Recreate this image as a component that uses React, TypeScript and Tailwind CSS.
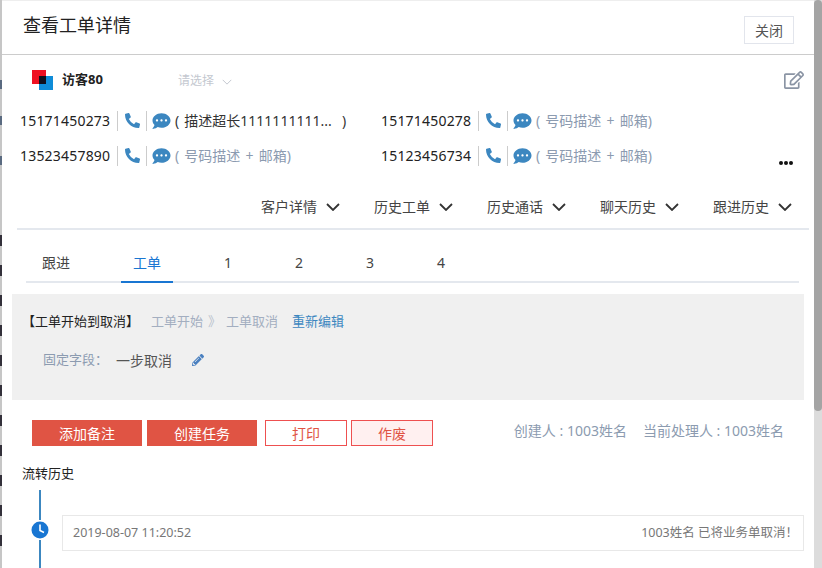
import { FaCommentDots, FaPencilAlt, FaPhoneAlt, FaRegEdit } from "react-icons/fa";

const font = "[font-family:'Noto_Sans','Noto_Sans_CJK_SC',sans-serif]";

const menus = ["客户详情", "历史工单", "历史通话", "聊天历史", "跟进历史"];
const tabs = ["跟进", "工单", "1", "2", "3", "4"];
const stripRows = Array.from({ length: 11 }, (_, i) => i);

function Chevron(props: { className: string; width: number }) {
  return (
    <svg viewBox="0 0 14 8" className={props.className} fill="none" stroke="currentColor" strokeWidth={props.width}>
      <path d="M1 1L7 7L13 1" />
    </svg>
  );
}

function PhoneRow(props: { phone: string; note: string; dark?: boolean }) {
  return (
    <div className="flex h-[35px] items-center">
      <span className="w-[97px] shrink-0 text-[14px] tracking-[0.2px] text-[#222]">{props.phone}</span>
      <span className="h-[20px] w-px shrink-0 bg-[#ccc]" />
      <span className="flex w-[28px] shrink-0 justify-center">
        <FaPhoneAlt className="h-[15px] w-[15px] text-[#3c87c0]" />
      </span>
      <span className="h-[20px] w-px shrink-0 bg-[#ccc]" />
      <FaCommentDots className="ml-[5px] h-[18px] w-[19px] shrink-0 text-[#3c87c0]" />
      <span
        className={`ml-[4px] whitespace-pre text-[14px] [word-spacing:1.5px] ${props.dark ? "text-[#333]" : "text-[#8c9bb0]"}`}
      >
        {props.note}
      </span>
    </div>
  );
}

export default function App() {
  return (
    <div className={`flex h-[568px] w-[822px] overflow-hidden bg-white ${font}`}>
      {/* 背后页面露出的一条 */}
      <div className="flex w-[2px] shrink-0 flex-col overflow-hidden bg-[#c6c6c6]">
        <div className="mt-[80px] h-[9px] w-[2px] shrink-0 bg-[#5a6a80]" />
        <div className="mt-[27px] h-[9px] w-[2px] shrink-0 bg-[#5a6a80]" />
        <div className="mt-[31px] h-[9px] w-[2px] shrink-0 bg-[#5a6a80]" />
        <div className="mt-[60px] shrink-0">
          {stripRows.map((i) => (
            <div key={i} className="flex h-[30.1px] items-center">
              <div className="h-[11px] w-[2px] bg-[#33303a]" />
            </div>
          ))}
        </div>
      </div>

      <div className="flex h-full min-w-0 flex-1 flex-col overflow-hidden border-t border-[#eee]">
        <div className="flex h-[54px] shrink-0 items-start justify-between border-b border-[#ccc] pl-[21px] pr-[20px]">
          <h1 className="mt-[11px] text-[18px] font-normal leading-[26px] text-[#222]">查看工单详情</h1>
          <button
            type="button"
            className="mt-[15px] h-[28px] w-[50px] border border-[#e2e5ec] text-[14px] text-[#555]"
          >
            关闭
          </button>
        </div>

        <div className="flex h-[37px] shrink-0 items-end pl-[30px] pr-[10px]">
          <div className="relative mb-[2px] h-[20px] w-[21px] shrink-0">
            <div className="h-[14px] w-[14px] bg-[#ee1122]" />
            <div className="absolute bottom-0 right-0 h-[14px] w-[14px] bg-[#0f8cd8]" />
            <div className="absolute left-[7px] top-[6px] h-[8px] w-[7px] bg-[#10101c]" />
          </div>
          <span className="mb-[3px] ml-[9px] w-[116px] text-[13px] font-bold leading-[20px] text-[#222]">访客80</span>
          <span className="mb-[1px] text-[12px] leading-[20px] text-[#c4c8d0]">请选择</span>
          <Chevron className="mb-[7px] ml-[8px] h-[6px] w-[10px] text-[#c4c8d0]" width={1.4} />
          <FaRegEdit className="mb-[3px] ml-auto h-[18px] w-[20px] text-[#8a94a4]" />
        </div>

        <div className="mt-[11px] flex shrink-0 pl-[18px]">
          <div className="w-[361px] shrink-0">
            <PhoneRow phone="15171450273" note="( 描述超长1111111111...  )" dark />
            <PhoneRow phone="13523457890" note="( 号码描述 + 邮箱)" />
          </div>
          <div className="w-[360px] shrink-0">
            <PhoneRow phone="15171450278" note="( 号码描述 + 邮箱)" />
            <PhoneRow phone="15123456734" note="( 号码描述 + 邮箱)" />
          </div>
          <div className="ml-[38px] flex items-end gap-[1px] pb-[8px]">
            <span className="h-[4px] w-[4px] rounded-full bg-[#111]" />
            <span className="h-[4px] w-[4px] rounded-full bg-[#111]" />
            <span className="h-[4px] w-[4px] rounded-full bg-[#111]" />
          </div>
        </div>

        <div className="ml-[15px] mr-[5px] mt-[16px] flex h-[41px] shrink-0 items-center justify-end gap-[34px] border-b-2 border-[#e4e8ee] pb-[3px] pr-[17px]">
          {menus.map((m) => (
            <div key={m} className="flex items-center gap-[9px] text-[14px] text-[#444]">
              <span className="mb-[1px]">{m}</span>
              <Chevron className="h-[8px] w-[14px] text-[#333]" width={1.8} />
            </div>
          ))}
        </div>

        <div className="ml-[24px] mr-[15px] mt-[14px] flex h-[39px] shrink-0 gap-[39px] border-b-2 border-[#e4e8ee] pl-[4px]">
          {tabs.map((t) => (
            <div
              key={t}
              className={`mb-[-2px] flex h-[39px] items-center border-b-2 px-[12px] pb-[1px] text-[14px] ${
                t === "工单" ? "border-[#1976d2] text-[#1976d2]" : "border-transparent text-[#444]"
              }`}
            >
              {t}
            </div>
          ))}
        </div>

        <div className="mx-[10px] mt-[11px] h-[106px] shrink-0 bg-[#f0f0f0] pl-[10px] pt-[17px]">
          <div className="flex h-[22px] items-center text-[13px]">
            <span className="w-[129px] text-[#222]">【工单开始到取消】</span>
            <span className="text-[#a3aec0]">工单开始</span>
            <span className="mx-[5px] text-[#b8c0cc]">》</span>
            <span className="text-[#a3aec0]">工单取消</span>
            <span className="ml-[14px] text-[#3c87c0]">重新编辑</span>
          </div>
          <div className="ml-[21px] mt-[16px] flex h-[22px] items-center">
            <span className="w-[73px] text-[13px] text-[#8c9bb0]">固定字段：</span>
            <span className="text-[14px] text-[#555]">一步取消</span>
            <FaPencilAlt className="ml-[20px] h-[12px] w-[12px] text-[#4a80c0]" />
          </div>
        </div>

        <div className="ml-[30px] mr-[30px] mt-[20px] flex h-[26px] shrink-0 items-center text-[14px]">
          <button type="button" className="h-[26px] w-[110px] bg-[#e05444] text-white">添加备注</button>
          <button type="button" className="ml-[5px] h-[26px] w-[110px] bg-[#e05444] text-white">创建任务</button>
          <button type="button" className="ml-[8px] h-[26px] w-[82px] border border-[#ee5050] text-[#e05444]">打印</button>
          <button type="button" className="ml-[4px] h-[26px] w-[82px] border border-[#ee5050] bg-[#fff0f0] text-[#e05444]">作废</button>
          <div className="mb-[5px] ml-auto flex gap-[16px] text-[#8c9bb0]">
            <span>创建人 : 1003姓名</span>
            <span>当前处理人 : 1003姓名</span>
          </div>
        </div>

        <div className="ml-[20px] mt-[17px] shrink-0 text-[13px] leading-[20px] text-[#222]">流转历史</div>

        <div className="ml-[29px] mr-[10px] mt-[7px] flex min-h-0 flex-1">
          <div className="flex w-[18px] shrink-0 flex-col items-center">
            <div className="h-[30px] w-[2px] shrink-0 bg-[#3c87c0]" />
            <svg viewBox="0 0 18 18" className="my-[1px] h-[18px] w-[18px] shrink-0">
              <circle cx="9" cy="9" r="8.5" fill="#1976d2" />
              <path d="M9 3.5V9.5L13 11.5" fill="none" stroke="#fff" strokeWidth="1.6" />
            </svg>
            <div className="w-[2px] flex-1 bg-[#3c87c0]" />
          </div>
          <div className="ml-[13px] mt-[25px] flex h-[36px] flex-1 items-center justify-between border border-[#e8e8e8] pl-[10px] pr-[5px] text-[12.5px] text-[#777]">
            <span>2019-08-07 11:20:52</span>
            <span>1003姓名 已将业务单取消！</span>
          </div>
        </div>
      </div>

      <div className="flex h-full w-[8px] shrink-0 flex-col bg-[#dcdcdc]">
        <div className="h-[411px] w-[8px] shrink-0 rounded-[4px] bg-[#a4a4a4]" />
      </div>
    </div>
  );
}
